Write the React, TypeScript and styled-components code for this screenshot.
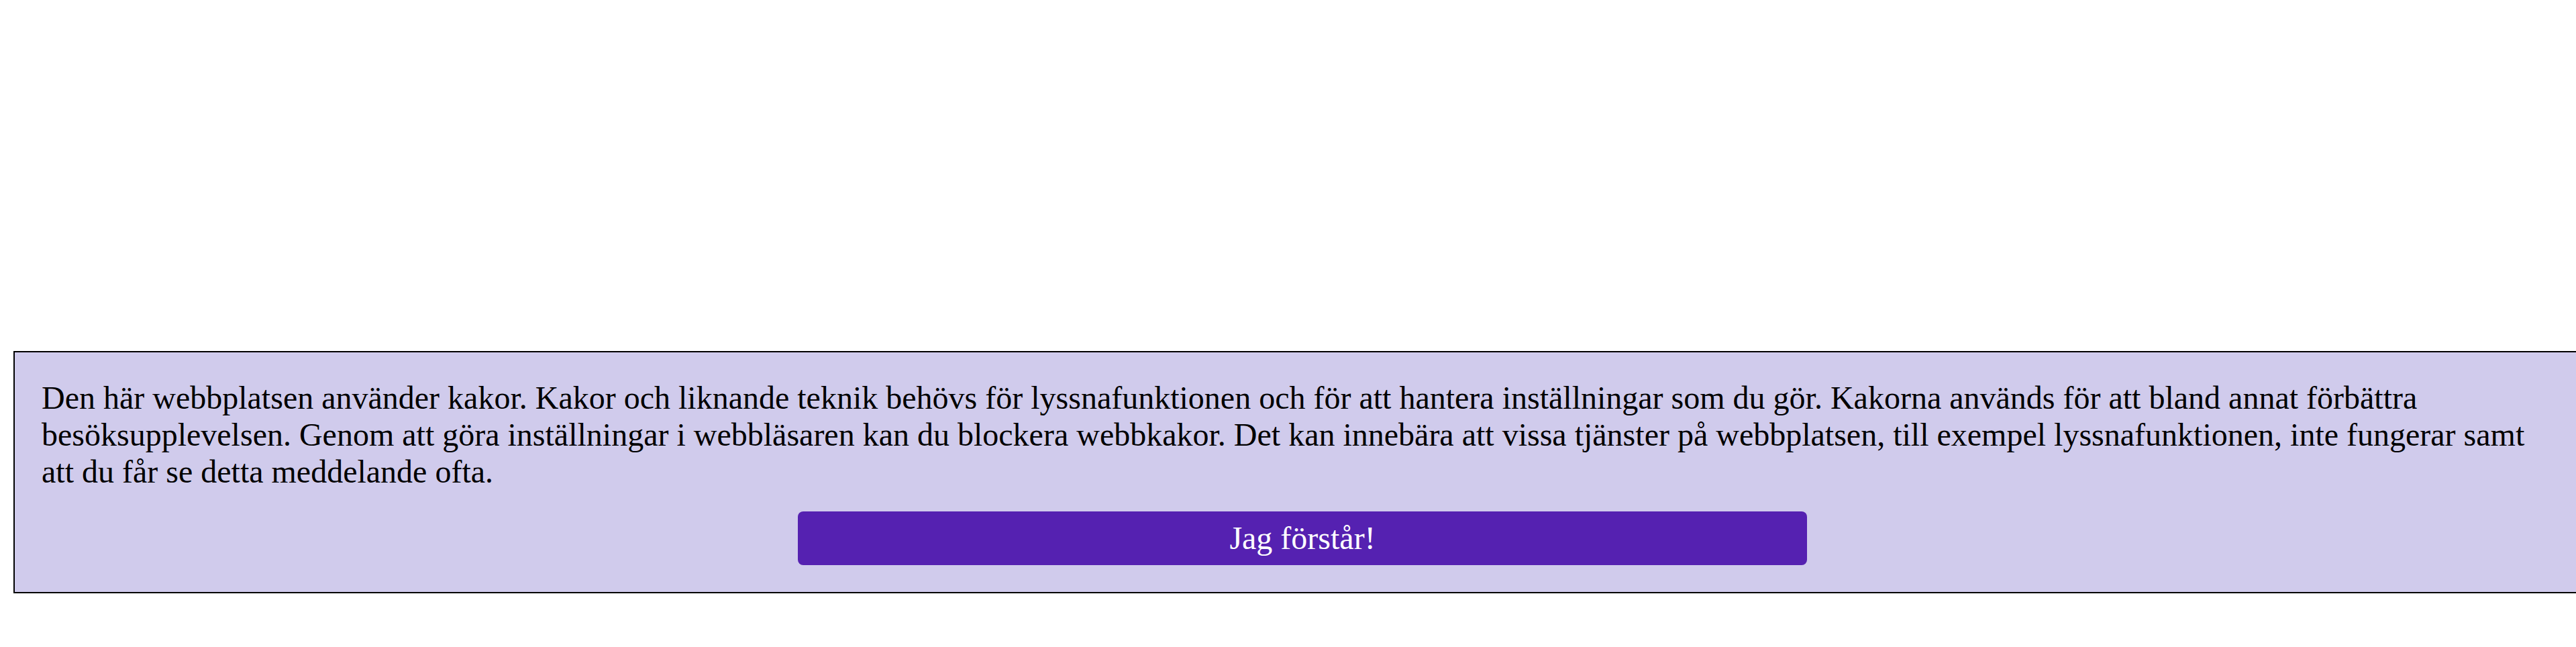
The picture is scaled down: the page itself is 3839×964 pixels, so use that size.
import React from "react";
import styled, { createGlobalStyle } from "styled-components";

const GlobalStyle = createGlobalStyle`
  html, body {
    margin: 0;
    padding: 0;
    background: #fff;
    overflow: hidden;
  }
  body {
    font-family: "Liberation Serif", "Times New Roman", serif;
  }
`;

const Page = styled.div`
  width: 100%;
  height: 964px;
  padding-top: 523px;
  box-sizing: border-box;
`;

const Banner = styled.div`
  box-sizing: border-box;
  width: 3840px;
  margin-left: 20px;
  padding: 40px;
  background: #d0cbec;
  border: 2px solid #000;
  border-right: none;
  display: flex;
  flex-direction: column;
  align-items: center;
  gap: 32px;
`;

const Message = styled.p`
  align-self: stretch;
  margin: 0;
  font-size: 48px;
  line-height: normal;
  color: #000;
`;

const AcceptButton = styled.button`
  width: 40%;
  padding: 12px 0;
  border: none;
  border-radius: 8px;
  background: #5521b1;
  color: #fff;
  font-family: "Liberation Serif", "Times New Roman", serif;
  font-size: 48px;
  line-height: 56px;
  cursor: pointer;
`;

const App = () => {
  return (
    <>
      <GlobalStyle />
      <Page>
        <Banner>
          <Message>
            Den här webbplatsen använder kakor. Kakor och liknande teknik behövs för
            lyssnafunktionen och för att hantera inställningar som du gör. Kakorna används för
            att bland annat förbättra besöksupplevelsen. Genom att göra inställningar i
            webbläsaren kan du blockera webbkakor. Det kan innebära att vissa tjänster på
            webbplatsen, till exempel lyssnafunktionen, inte fungerar samt att du får se detta
            meddelande ofta.
          </Message>
          <AcceptButton>Jag förstår!</AcceptButton>
        </Banner>
      </Page>
    </>
  );
};

export default App;
